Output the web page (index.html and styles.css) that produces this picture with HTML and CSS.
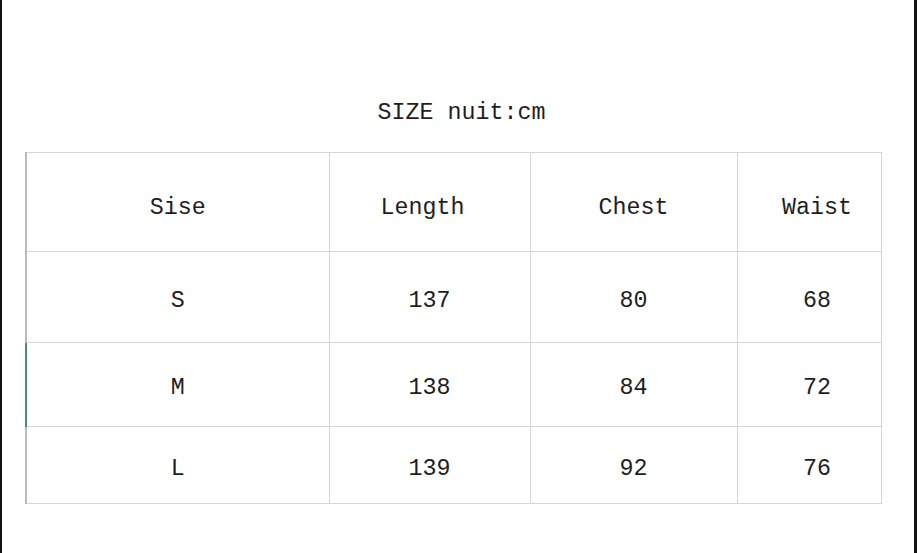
FILE: index.html
```html
<!DOCTYPE html>
<html>
<head>
<meta charset="utf-8">
<link rel="stylesheet" href="styles.css">
</head>
<body>
<div class="frame">
  <div class="title">SIZE nuit:cm</div>
  <table class="size-table">
    <colgroup>
      <col class="c1"><col class="c2"><col class="c3"><col class="c4">
    </colgroup>
    <tr class="head">
      <td class="first">Sise</td>
      <td class="len">Length</td>
      <td>Chest</td>
      <td class="last">Waist</td>
    </tr>
    <tr class="r1">
      <td class="first">S</td>
      <td>137</td>
      <td>80</td>
      <td class="last">68</td>
    </tr>
    <tr class="r2">
      <td class="first mark">M</td>
      <td>138</td>
      <td>84</td>
      <td class="last">72</td>
    </tr>
    <tr class="r3">
      <td class="first">L</td>
      <td>139</td>
      <td>92</td>
      <td class="last">76</td>
    </tr>
  </table>
</div>
</body>
</html>
```
FILE: styles.css
```css
html, body {
  margin: 0;
  padding: 0;
  background: #fff;
}
.frame {
  box-sizing: border-box;
  width: 917px;
  height: 553px;
  border-left: 2px solid #111;
  border-right: 3px solid #111;
  padding-top: 100px;
  font-family: "Liberation Mono", "DejaVu Sans Mono", monospace;
  font-size: 23.3px;
  color: #1e1e1e;
}
.title {
  line-height: 26px;
  height: 26px;
  text-align: center;
  padding-left: 7px;
  margin-bottom: 26px;
}
.size-table {
  border-collapse: collapse;
  table-layout: fixed;
  margin-left: 23px;
  width: 855px;
}
.c1 { width: 303px; }
.c2 { width: 201px; }
.c3 { width: 207px; }
.c4 { width: 144px; }
.size-table td {
  border: 1px solid #d6d6d6;
  text-align: center;
  vertical-align: middle;
  padding: 0;
  line-height: 26px;
}
.size-table td.first {
  border-left: 2px solid #bababa;
}
.size-table td.first.mark {
  border-left: 2px solid #4f8a70;
}
.size-table td.last {
  padding-left: 16px;
}
.size-table td.len {
  padding-right: 14px;
}
.head td { height: 99px; padding-top: 12px; box-sizing: border-box; }
.r1 td { height: 91px; padding-top: 7px; box-sizing: border-box; }
.r2 td { height: 84px; padding-top: 7px; box-sizing: border-box; }
.r3 td { height: 77px; padding-top: 7px; box-sizing: border-box; }
```
